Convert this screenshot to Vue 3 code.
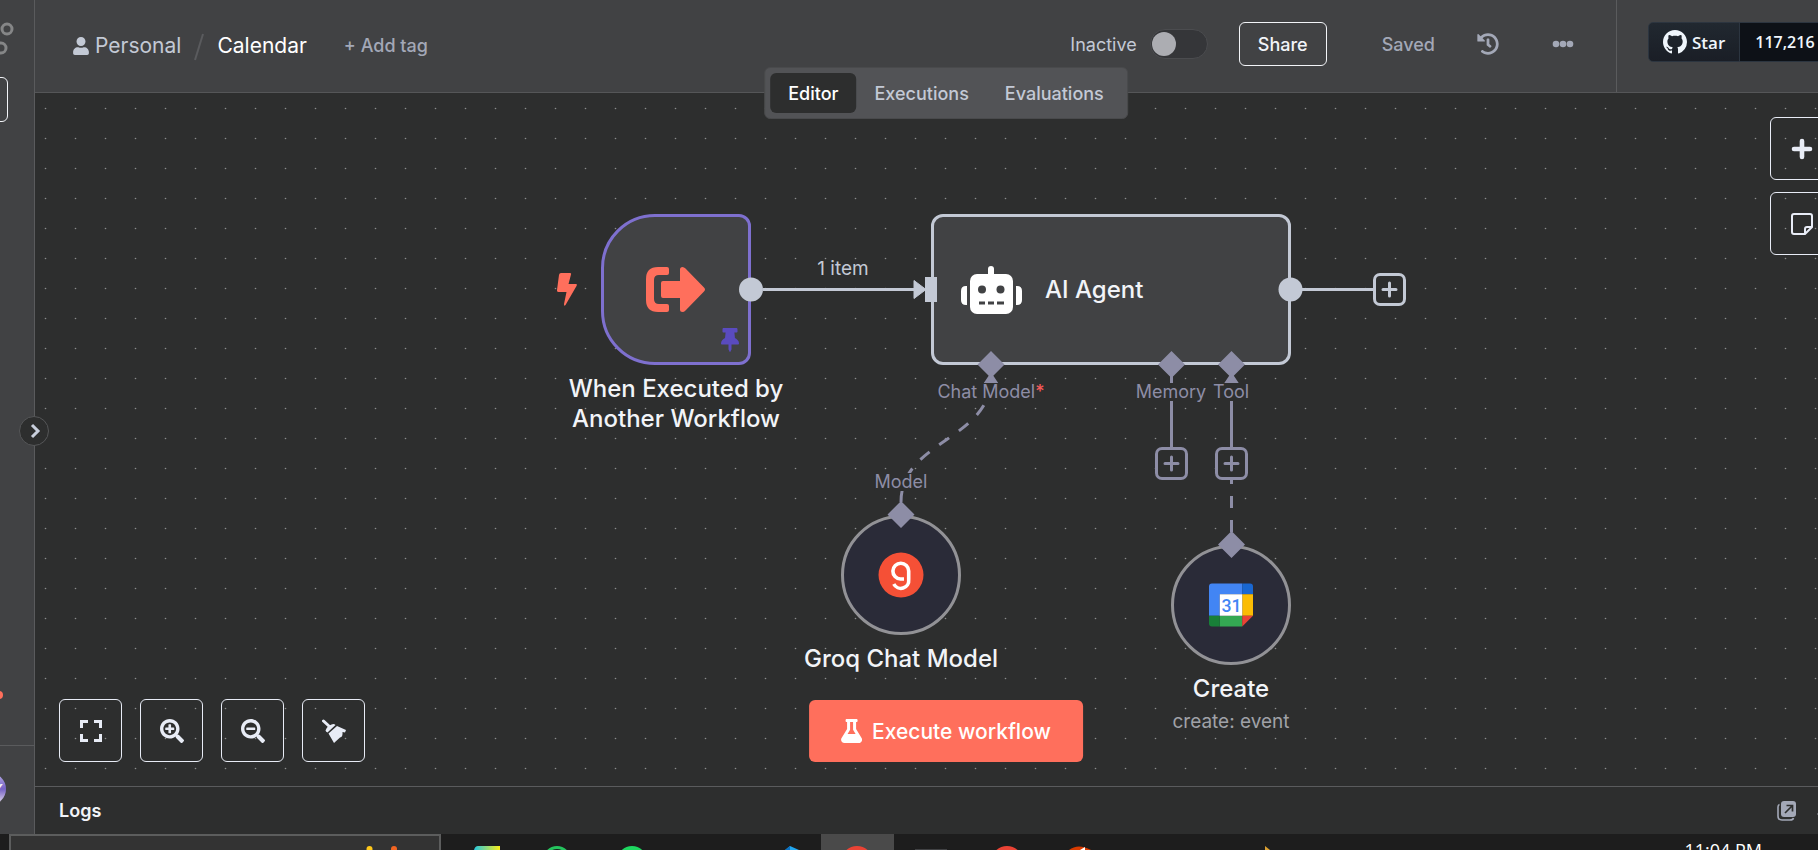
<script setup>
import { ref } from 'vue'

const tabs = ['Editor', 'Executions', 'Evaluations']
const activeTab = ref('Editor')
const active = ref(false)

const zoomLens = 'M505 476.700L476.700 505c-9.400 9.400-24.600 9.400-33.900 0L343 405.300c-4.500-4.500-7-10.600-7-17V372c-35.300 27.600-79.700 44-128 44C93.100 416 0 322.900 0 208S93.100 0 208 0s208 93.100 208 208c0 48.300-16.400 92.700-44 128h16.300c6.400 0 12.500 2.500 17 7l99.700 99.700c9.300 9.400 9.300 24.600 0 34zM344 208c0-75.200-60.800-136-136-136S72 132.800 72 208s60.800 136 136 136 136-60.800 136-136z'
</script>

<template>
  <div class="screen">
    <div class="app">
      <aside class="sidebar">
        <svg class="brand" width="34" height="40" viewBox="0 0 34 40" fill="none" stroke="#858687" stroke-width="3">
          <circle cx="7" cy="14" r="5" />
          <circle cx="1" cy="33" r="5" />
        </svg>
        <button class="create" aria-label="Create"></button>
        <span class="notice"></span>
        <div class="user">
          <span class="avatar">Y</span>
        </div>
      </aside>
      <button class="expand" aria-label="Expand sidebar">
        <svg width="30" height="30" viewBox="0 0 30 30" fill="none" stroke="#c9cfdd" stroke-width="3"><path d="M13 9l6 6-6 6" /></svg>
      </button>

      <main class="workspace">
        <header class="topbar">
          <nav class="crumbs">
            <a href="#" class="owner">
              <svg width="16" height="18" viewBox="0 0 448 512" fill="currentColor"><path d="M224 256c70.700 0 128-57.300 128-128S294.700 0 224 0 96 57.300 96 128s57.300 128 128 128zm89.600 32h-16.700c-22.200 10.200-46.900 16-72.900 16s-50.600-5.800-72.900-16h-16.700C60.200 288 0 348.200 0 422.400V464c0 26.500 21.500 48 48 48h352c26.500 0 48-21.500 48-48v-41.600c0-74.200-60.200-134.400-134.400-134.400z" /></svg>
              Personal
            </a>
            <svg class="slash" width="10" height="28" viewBox="0 0 10 28" stroke="#5a5b5e" stroke-width="2"><path d="M9 1L1 27" /></svg>
            <a href="#" class="title">Calendar</a>
            <button class="tag">+ Add tag</button>
          </nav>
          <div class="actions">
            <label class="status">Inactive <input v-model="active" type="checkbox" role="switch" /></label>
            <button class="share">Share</button>
            <span class="saved">Saved</span>
            <button class="icon" aria-label="History">
              <svg width="22" height="22" viewBox="0 0 512 512" fill="currentColor"><path d="M504 255.531c.253 136.640-111.180 248.372-247.820 248.468-59.015.042-113.223-20.530-155.822-54.911-11.077-8.940-11.905-25.541-1.839-35.607l11.267-11.267c8.609-8.609 22.353-9.551 31.891-1.984C173.062 425.135 212.781 440 256 440c101.705 0 184-82.311 184-184 0-101.705-82.311-184-184-184-48.814 0-93.149 18.969-126.068 49.932l50.754 50.754c10.080 10.080 2.941 27.314-11.313 27.314H24c-8.837 0-16-7.163-16-16V38.627c0-14.254 17.234-21.393 27.314-11.314l49.372 49.372C129.209 34.136 189.552 8 256 8c136.810 0 247.747 110.780 248 247.531zm-180.912 78.784l9.823-12.630c8.138-10.463 6.253-25.542-4.210-33.679L288 256.349V152c0-13.255-10.745-24-24-24h-16c-13.255 0-24 10.745-24 24v135.651l65.409 50.874c10.463 8.137 25.541 6.253 33.679-4.210z" /></svg>
            </button>
            <button class="icon" aria-label="More">
              <svg width="22" height="22" viewBox="0 0 22 22" fill="currentColor"><circle cx="4" cy="11" r="3.300" /><circle cx="11" cy="11" r="3.300" /><circle cx="18" cy="11" r="3.300" /></svg>
            </button>
          </div>
          <div class="github">
            <a href="#" class="star">
              <svg width="24" height="24" viewBox="0 0 16 16" fill="currentColor"><path d="M8 0C3.580 0 0 3.580 0 8c0 3.540 2.290 6.530 5.470 7.590.4.070.550-.170.550-.380 0-.190-.010-.820-.010-1.490-2.010.370-2.530-.490-2.690-.940-.090-.230-.480-.940-.820-1.130-.280-.150-.680-.520-.010-.530.630-.010 1.080.580 1.230.820.720 1.210 1.870.870 2.330.660.070-.520.280-.870.510-1.070-1.780-.200-3.640-.890-3.640-3.950 0-.870.310-1.590.820-2.150-.080-.200-.360-1.020.080-2.120 0 0 .670-.210 2.200.820.640-.180 1.320-.270 2-.270.680 0 1.360.090 2 .270 1.530-1.040 2.200-.820 2.200-.820.440 1.100.160 1.920.080 2.120.510.560.820 1.270.820 2.150 0 3.070-1.870 3.750-3.650 3.950.290.250.540.730.540 1.480 0 1.070-.010 1.930-.010 2.200 0 .210.150.460.550.380A8.013 8.013 0 0016 8c0-4.420-3.580-8-8-8z" /></svg>
              Star
            </a>
            <a href="#" class="count">117,216</a>
          </div>
        </header>

        <section class="canvas">
          <div class="tabs">
            <button v-for="t in tabs" :key="t" :class="{ on: t === activeTab }" @click="activeTab = t">{{ t }}</button>
          </div>

          <svg class="layer">
            <defs>
              <pattern id="dots" width="30" height="30" patternUnits="userSpaceOnUse">
                <circle cx="10.500" cy="15.500" r="0.800" fill="#8a8c8d" />
              </pattern>
            </defs>
            <rect width="100%" height="100%" fill="url(#dots)" />
            <g transform="translate(-35 -93)" fill="none" stroke-width="3">
              <path d="M763 289.500H916M1302 289.500H1373" stroke="#c3c9d5" />
              <path d="M914 280.500V298.500L926 289.500Z" fill="#c3c9d5" stroke="#c3c9d5" stroke-width="1" />
              <g stroke="#8d8da6">
                <path d="M1171.500 375V448M1231.500 375V448" />
                <path d="M901 502C901 440 991 440 991 378M1231.500 532V480" stroke-dasharray="12 12" />
                <path d="M991 374l6 9h-12zM1231.500 374l6 9h-12z" fill="#8d8da6" stroke-width="2" />
              </g>
            </g>
          </svg>

          <span class="port-label chat">Chat Model<b>*</b></span>
          <span class="port-label memory">Memory</span>
          <span class="port-label tool">Tool</span>
          <span class="port-label model">Model</span>
          <span class="edge-label">1 item</span>

          <svg class="bolt" width="20" height="34" viewBox="0 0 20 34" fill="#ff6f5c"><path d="M4 0H13Q14.500 0 14 1.500L11.500 11H19Q20.500 11 19.500 13L8.500 32Q7 34 7 31L9.500 19H1.500Q-.200 19 0 17L2 2Q2.300 0 4 0Z" /></svg>

          <article class="node trigger">
            <svg width="60" height="46" viewBox="0 0 60 46" fill="#ff6f5c">
              <path d="M12 0H21Q23 0 23 2V6Q23 8 21 8H13Q8 8 8 13V32Q8 37 13 37H21Q23 37 23 39V43Q23 45 21 45H12Q0 45 0 33V12Q0 0 12 0Z" />
              <path d="M17 14H34V2.500Q34 0 36.500 0Q38 0 39.500 1.500L58 20.500Q60 22.500 58 24.500L39.500 43.500Q38 45 36.500 45Q34 45 34 42.500V31H17Q15 31 15 29V16Q15 14 17 14Z" />
            </svg>
            <svg class="pin" width="18" height="24" viewBox="0 0 384 512" fill="#5a4bbf"><path d="M298.028 214.267L285.793 96H328c13.255 0 24-10.745 24-24V24c0-13.255-10.745-24-24-24H56C42.745 0 32 10.745 32 24v48c0 13.255 10.745 24 24 24h42.207L85.972 214.267C37.465 236.820 0 277.261 0 328c0 13.255 10.745 24 24 24h136v104.007c0 1.242.289 2.467.845 3.578l24 48c2.941 5.882 11.364 5.893 14.311 0l24-48a8.008 8.008 0 0 0 .845-3.578V352h136c13.255 0 24-10.745 24-24-.001-51.183-37.983-91.420-85.973-113.733z" /></svg>
            <h2 class="caption">When Executed by<br />Another Workflow</h2>
          </article>

          <article class="node agent">
            <svg width="61" height="48" viewBox="0 0 61 48" fill="#fff">
              <path d="M27 10V3a3 3 0 0 1 6 0V10Z" />
              <rect x="9" y="8" width="43" height="40" rx="7" />
              <path d="M6 20V39H5Q0 39 0 34V25Q0 20 5 20ZM55 20V39H56Q61 39 61 34V25Q61 20 56 20Z" />
              <g fill="#414244"><circle cx="21" cy="23.500" r="4" /><circle cx="39.500" cy="23.500" r="4" /><path d="M18 35.500h6v3h-6zM27 35.500h6v3h-6zM36 35.500h7v3h-7z" /></g>
            </svg>
            <h2>AI Agent</h2>
          </article>

          <article class="node round groq">
            <svg width="46" height="46" viewBox="0 0 46 46">
              <circle cx="23" cy="23" r="22.500" fill="#f55036" />
              <path d="M26 27H22.500A7.900 7.900 0 1 1 30.700 19V27.500A7.900 7.900 0 0 1 15.800 32" fill="none" stroke="#fff" stroke-width="3.600" />
            </svg>
            <h2 class="caption">Groq Chat Model</h2>
          </article>

          <article class="node round event">
            <svg width="44" height="44" viewBox="0 0 45 44">
              <path d="M3 0H34V11H11V33H0V3Q0 0 3 0Z" fill="#4285f4" />
              <path d="M34 0H42Q45 0 45 3V11H34Z" fill="#1967d2" />
              <path d="M34 11H45V33H34Z" fill="#fbbc04" />
              <path d="M11 33H34V44H11Z" fill="#34a853" />
              <path d="M0 33H11V44H3Q0 44 0 41Z" fill="#188038" />
              <path d="M34 33H45L34 44Z" fill="#ea4335" />
              <path d="M11 11H34V33H11Z" fill="#fff" />
              <text x="23" y="29" text-anchor="middle" class="day">31</text>
            </svg>
            <h2 class="caption">Create<small>create: event</small></h2>
          </article>

          <svg class="layer">
            <g transform="translate(-35 -93)">
              <g fill="#c3c9d5"><circle cx="751" cy="289.500" r="12" /><circle cx="1290.500" cy="289.500" r="12" /><rect x="925" y="277" width="12" height="25" /></g>
              <g fill="#8d8da6">
                <path d="M991 351l13.500 13.500-13.500 13.500-13.500-13.500zM1171.500 351l13.500 13.500-13.500 13.500-13.500-13.500zM1231.500 351l13.500 13.500-13.500 13.500-13.500-13.500z" />
                <path d="M901 501l13.500 13.500-13.500 13.500-13.500-13.500zM1231.500 531l13.500 13.500-13.500 13.500-13.500-13.500z" />
              </g>
            </g>
          </svg>

          <button class="add out" aria-label="Add node"><svg width="17" height="17" viewBox="0 0 17 17"><path d="M8.500 2V15M2 8.500H15" /></svg></button>
          <button class="add mem" aria-label="Add memory"><svg width="17" height="17" viewBox="0 0 17 17"><path d="M8.500 2V15M2 8.500H15" /></svg></button>
          <button class="add tl" aria-label="Add tool"><svg width="17" height="17" viewBox="0 0 17 17"><path d="M8.500 2V15M2 8.500H15" /></svg></button>

          <div class="side-tools">
            <button class="square" aria-label="Add node">
              <svg width="22" height="22" viewBox="0 0 22 22" fill="none" stroke="#e8ecf6" stroke-width="4.600" stroke-linecap="round"><path d="M11 3V19M3 11H19" /></svg>
            </button>
            <button class="square" aria-label="Add sticky note">
              <svg width="22" height="22" viewBox="0 0 22 22" fill="none" stroke="#e8ecf6" stroke-width="2"><path d="M3 1H19Q21 1 21 3V14L14 21H3Q1 21 1 19V3Q1 1 3 1Z" /><path d="M14 21V16Q14 14 16 14H21" /></svg>
            </button>
          </div>

          <div class="view-tools">
            <button class="square" aria-label="Fit view">
              <svg width="22" height="22" viewBox="0 0 22 22" fill="none" stroke="#e8ecf6" stroke-width="3"><path d="M1.500 8V1.500H8M14 1.500H20.500V8M20.500 14V20.500H14M8 20.500H1.500V14" /></svg>
            </button>
            <button class="square" aria-label="Zoom in">
              <svg width="24" height="24" viewBox="0 0 512 512" fill="#e8ecf6"><path d="M304 192v32c0 6.600-5.400 12-12 12h-56v56c0 6.600-5.400 12-12 12h-32c-6.600 0-12-5.400-12-12v-56h-56c-6.600 0-12-5.400-12-12v-32c0-6.600 5.400-12 12-12h56v-56c0-6.600 5.400-12 12-12h32c6.600 0 12 5.400 12 12v56h56c6.600 0 12 5.400 12 12z" /><path :d="zoomLens" /></svg>
            </button>
            <button class="square" aria-label="Zoom out">
              <svg width="24" height="24" viewBox="0 0 512 512" fill="#e8ecf6"><path d="M304 192v32c0 6.600-5.400 12-12 12H124c-6.600 0-12-5.400-12-12v-32c0-6.600 5.400-12 12-12h168c6.600 0 12 5.400 12 12z" /><path :d="zoomLens" /></svg>
            </button>
            <button class="square" aria-label="Tidy up">
              <svg width="24" height="24" viewBox="0 0 24 24" fill="#e8ecf6"><path d="M1.500 2L8 8" stroke="#e8ecf6" stroke-width="3" stroke-linecap="round" /><path d="M3.500 11.500Q5 7 9.500 5.500Q12 4.500 13.500 6L5.500 13.500Q4 13 3.500 11.500Z" /><path d="M6.500 14.500L15 7L24 11L23 13.500L20.500 13Q21 18 18 18.500L12 24Z" /></svg>
            </button>
          </div>

          <button class="execute">
            <svg width="21" height="24" viewBox="0 0 448 512" fill="#fff"><path d="M437.200 403.500L320 215V64h8c13.300 0 24-10.700 24-24V24c0-13.300-10.700-24-24-24H120c-13.300 0-24 10.700-24 24v16c0 13.300 10.700 24 24 24h8v151L10.800 403.500C-18.500 450.600 15.300 512 70.900 512h306.200c55.700 0 89.400-61.500 60.100-108.500zM137.900 320l48.200-77.600c3.700-5.200 5.800-11.600 5.800-18.400V64h64v160c0 6.900 2.200 13.200 5.800 18.400l48.200 77.600h-172z" /></svg>
            Execute workflow
          </button>
        </section>

        <footer class="logs">
          <h3>Logs</h3>
          <button aria-label="Pop out">
            <svg width="20" height="20" viewBox="0 0 20 20"><path d="M2.500 3.500Q1 4 1 6V15Q1 19 5 19H13Q16 19 16.500 17" fill="none" stroke="#a3a8b7" stroke-width="1.600" /><rect x="4" y="0" width="15" height="16" rx="3" fill="#a3a8b7" /><path d="M8 12L15 5M9.500 4.500H15.500V10.500" fill="none" stroke="#2d2e2e" stroke-width="1.700" /></svg>
          </button>
          <button aria-label="Open panel">
            <svg width="20" height="20" viewBox="0 0 20 20" fill="none" stroke="#a3a8b7" stroke-width="3" stroke-linecap="round"><path d="M3 13L10 6L17 13" /></svg>
          </button>
        </footer>
      </main>
    </div>

    <div class="taskbar">
      <div class="search"></div>
      <div class="running"></div>
      <svg class="apps" width="1300" height="16" viewBox="0 0 1300 16">
        <defs><linearGradient id="pc"><stop offset="0" stop-color="#25c6e0" /><stop offset="1" stop-color="#fbee18" /></linearGradient></defs>
        <circle cx="369.500" cy="15" r="3" fill="#ffc81a" />
        <circle cx="394" cy="15" r="3" fill="#f26522" />
        <path d="M474 16Q475 12 478 12H500V16Z" fill="url(#pc)" />
        <circle cx="557" cy="26" r="12.500" fill="none" stroke="#25c45e" stroke-width="3" />
        <circle cx="632" cy="27" r="15" fill="#1ed760" />
        <path d="M785 16L790 12L799 16Z" fill="#22a7f0" /><path d="M785 16L790 12V16Z" fill="#0b70c0" />
        <circle cx="857" cy="28" r="16" fill="#ea4335" />
        <path d="M915 15.500H947" stroke="#414244" />
        <circle cx="1007" cy="28" r="16" fill="#ea4335" />
        <path d="M1069 16Q1078 9 1091 16Z" fill="#d83b01" /><path d="M1080 16L1085 13V16Z" fill="#fff" />
        <path d="M1265 12L1270 16H1265Z" fill="#dba032" />
      </svg>
      <time>11:04 PM</time>
    </div>
  </div>
</template>

<style>
body { margin: 0; background: #2d2e2e; overflow: hidden; }
</style>

<style scoped>
.screen { display: flex; flex-direction: column; height: 100vh; overflow: hidden; font-family: Inter, "Liberation Sans", sans-serif; font-size: 18px; color: #f2f4f8; }
button { font: inherit; color: inherit; background: none; border: 0; padding: 0; cursor: pointer; }
a { color: inherit; text-decoration: none; }
svg { display: block; flex: none; }
h2, h3 { margin: 0; font-weight: 500; }

.app { position: relative; display: flex; flex: 1; min-height: 0; width: calc(100% + 39px); }
.sidebar { display: flex; flex-direction: column; width: 34px; border-right: 1px solid #5a5b5d; background: #414244; overflow: hidden; }
.brand { margin-top: 15px; }
.create { width: 38px; height: 45px; margin: 22px 0 0 -30px; box-sizing: border-box; border: 1px solid #f2f4f8; border-radius: 6px; }
.notice { width: 8px; height: 8px; margin: auto 0 46px -5px; border-radius: 50%; background: #ff6f5c; }
.user { height: 89px; box-sizing: border-box; border-top: 1px solid #5a5b5d; padding-top: 27px; }
.avatar { display: flex; align-items: center; justify-content: flex-end; box-sizing: border-box; width: 32px; height: 32px; margin-left: -26px; padding-right: 4px; border-radius: 50%; background: linear-gradient(#b9aee8, #7562c4 50%, #f0eaf2); font-size: 14px; font-weight: 600; font-style: italic; }
.expand { position: absolute; z-index: 3; left: 19px; top: 416px; width: 30px; height: 30px; border: 1px solid #555658; border-radius: 50%; background: #2d2e2e; box-sizing: border-box; }
.expand svg { margin: -1px; }

.workspace { display: flex; flex-direction: column; flex: 1; min-width: 0; }
.topbar { display: flex; height: 92px; background: #414244; border-bottom: 1px solid #555658; }
.crumbs { display: flex; align-items: center; padding: 0 0 2px 38px; }
.owner { display: flex; align-items: center; gap: 6px; font-size: 21px; color: #c3c9d5; }
.owner svg { margin-top: 2px; }
.slash { margin: 4px 13px 0 13px; }
.title { font-size: 21px; color: #fff; }
.tag { margin-left: 37px; font-weight: 500; color: #a3a8b7; }
.actions { display: flex; align-items: center; margin-left: auto; padding: 0 42px 4px 0; color: #a3a8b7; }
.status { display: flex; align-items: center; gap: 13px; color: #c3c9d5; }
.status input { appearance: none; width: 58px; height: 30px; margin: 0; box-sizing: border-box; border: 1px solid #4b4c4f; border-radius: 15px; background: #353639; display: flex; align-items: center; padding: 0 1px; }
.status input::before { content: ""; width: 24px; height: 24px; border-radius: 50%; background: #acadb2; }
.share { width: 88px; height: 44px; margin: 0 55px 0 31px; border: 1px solid #f2f4f8; border-radius: 6px; font-weight: 500; color: #f2f4f8; }
.saved { font-weight: 500; }
.icon { margin-left: 42px; }
.icon + .icon { margin-left: 53px; }
.github { display: flex; align-items: center; box-sizing: border-box; width: 241px; padding: 0 0 8px 31px; border-left: 1px solid #5a5b5d; font-family: "Open Sans", "Noto Sans", sans-serif; font-weight: 600; font-size: 17px; color: #f0f6fc; }
.star, .count { display: flex; align-items: center; height: 38px; border: 1px solid #2c3540; }
.star { gap: 5px; padding: 0 14px; background: linear-gradient(#212830, #1a1e26); border-radius: 5px 0 0 5px; }
.count { padding: 0 20px 0 15px; background: #0d1117; border-left: 0; border-radius: 0 5px 5px 0; font-size: 16px; }

.canvas { position: relative; flex: 1; min-height: 0; background: #2d2e2e; }
.layer { position: absolute; inset: 0; width: 100%; height: 100%; pointer-events: none; }
.tabs { position: absolute; z-index: 2; top: -26px; left: 50%; transform: translateX(-50%); display: flex; padding: 5px; border: 1px solid #494a4c; border-radius: 6px; background: #525356; }
.tabs button { height: 40px; padding: 0 18px; border-radius: 6px; font-weight: 500; color: #c3c9d5; }
.tabs .on { background: #2d2e2e; color: #fff; }

.port-label, .edge-label { position: absolute; transform: translateX(-50%); white-space: nowrap; line-height: 18px; }
.port-label { color: #8d8da6; background: #2d2e2e; }
.port-label b { font-weight: 500; color: #f45959; }
.chat { left: 956px; top: 290px; }
.memory { left: 1136px; top: 290px; }
.tool { left: 1196px; top: 290px; }
.model { left: 866px; top: 380px; }
.edge-label { left: 808px; top: 167px; font-size: 19px; color: #c3c9d5; }

.bolt { position: absolute; left: 522px; top: 180px; }
.node { position: absolute; display: flex; align-items: center; justify-content: center; box-sizing: border-box; border: 3px solid #c3c9d5; background: #414244; }
.node h2 { font-size: 24px; line-height: 30px; white-space: nowrap; }
.node .caption { position: absolute; top: 100%; left: 50%; transform: translateX(-50%); margin-top: 12px; text-align: center; }
.trigger { left: 566px; top: 121px; width: 150px; height: 151px; border-color: #7e70cf; border-radius: 54px 12px 12px 54px; }
.pin { position: absolute; right: 9px; bottom: 10px; }
.agent { left: 896px; top: 121px; width: 360px; height: 151px; border-radius: 12px; justify-content: flex-start; padding-left: 27px; gap: 23px; }
.round { width: 120px; height: 120px; border-color: #929296; border-radius: 50%; background: #2a2b38; }
.groq { left: 806px; top: 422px; }
.event { left: 1136px; top: 452px; }
.day { font: 500 18px Roboto, sans-serif; fill: #4285f4; }
.caption small { display: block; margin-top: 3px; font-size: 19px; font-weight: 400; color: #a0a2a8; }

.add { position: absolute; display: grid; place-items: center; box-sizing: border-box; width: 33px; height: 33px; border: 3px solid #8d8da6; border-radius: 7px; background: #2d2e2e; }
.add path { stroke: #8d8da6; stroke-width: 3; stroke-linecap: round; }
.out { left: 1338px; top: 180px; border-color: #c3c9d5; }
.out path { stroke: #c3c9d5; }
.mem { left: 1120px; top: 354px; }
.tl { left: 1180px; top: 354px; }

.square { display: grid; place-items: center; box-sizing: border-box; width: 63px; height: 63px; border: 1px solid #e8ecf6; border-radius: 6px; }
.side-tools { position: absolute; top: 24px; right: 24px; display: grid; gap: 12px; }
.view-tools { position: absolute; bottom: 24px; left: 24px; display: flex; gap: 18px; }
.execute { position: absolute; bottom: 24px; left: 50%; transform: translateX(-50%); display: flex; align-items: center; gap: 10px; height: 62px; padding: 0 32px; border-radius: 6px; background: #ff6f5c; font-size: 21px; font-weight: 500; color: #fff; white-space: nowrap; }

.logs { display: flex; align-items: center; height: 47px; padding: 0 21px 0 24px; border-top: 1px solid #5a5b5d; background: #2d2e2e; }
.logs h3 { flex: 1; font-size: 18px; font-weight: 600; }
.logs button + button { margin-left: 19px; }

.taskbar { position: relative; display: flex; height: 16px; background: #1d1d1d; overflow: hidden; }
.search { box-sizing: border-box; width: 432px; height: 40px; margin-left: 9px; border: 2px solid #5c5d5d; background: #333; }
.running { width: 73px; margin-left: 380px; background: #4a4a4a; }
.apps { position: absolute; left: 0; top: 0; }
.taskbar time { margin: 4px 56px 0 auto; font: 18px/24px "Open Sans", "Noto Sans", sans-serif; color: #fff; }
</style>
